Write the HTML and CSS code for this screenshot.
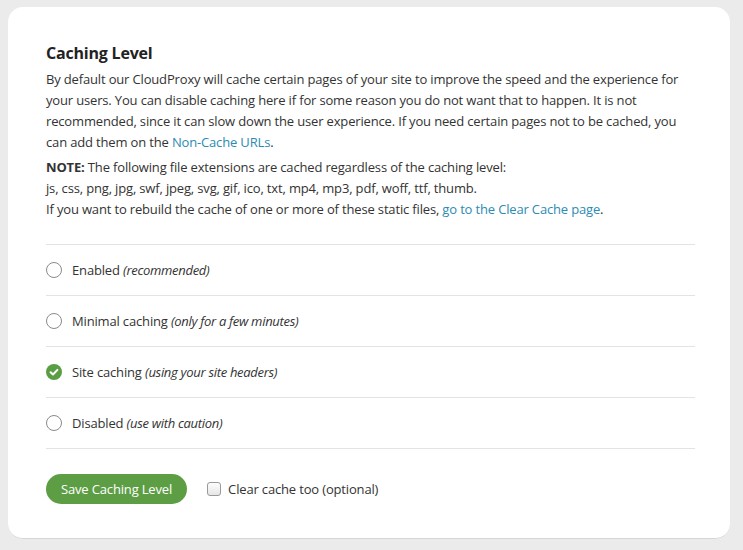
FILE: index.html
```html
<!DOCTYPE html>
<html>
<head>
<meta charset="utf-8">
<link rel="stylesheet" href="styles.css">
</head>
<body>
<div class="card">
  <h2 class="title">Caching Level</h2>
  <p class="desc">By default our CloudProxy will cache certain pages of your site to improve the speed and the experience for your users. You can disable caching here if for some reason you do not want that to happen. It is not recommended, since it can slow down the user experience. If you need certain pages not to be cached, you can add them on the <a class="link" href="#">Non-Cache URLs</a>.</p>
  <p class="note"><strong>NOTE:</strong> The following file extensions are cached regardless of the caching level:<br>js, css, png, jpg, swf, jpeg, svg, gif, ico, txt, mp4, mp3, pdf, woff, ttf, thumb.<br>If you want to rebuild the cache of one or more of these static files, <a class="link" href="#">go to the Clear Cache page</a>.</p>
  <ul class="options">
    <li class="option"><span class="radio"></span><span>Enabled <em>(recommended)</em></span></li>
    <li class="option"><span class="radio"></span><span>Minimal caching <em>(only for a few minutes)</em></span></li>
    <li class="option"><span class="radio checked"><svg width="16" height="16" viewBox="0 0 16 16"><circle cx="8" cy="8" r="8" fill="#5a9e43"/><path d="M4.6 8.2 L7 10.5 L11.4 5.9" fill="none" stroke="#fff" stroke-width="2" stroke-linecap="round" stroke-linejoin="round"/></svg></span><span>Site caching <em>(using your site headers)</em></span></li>
    <li class="option"><span class="radio"></span><span>Disabled <em>(use with caution)</em></span></li>
  </ul>
  <div class="actions">
    <button class="save">Save Caching Level</button>
    <label class="check"><span class="box"></span>Clear cache too (optional)</label>
  </div>
</div>
</body>
</html>
```
FILE: styles.css
```css
html, body {
  margin: 0;
  padding: 0;
  background: #ebebeb;
}
body {
  font-family: "Open Sans", "Noto Sans", sans-serif;
  color: #333;
  font-size: 13px;
  letter-spacing: -0.16px;
}
.card {
  box-sizing: border-box;
  margin: 7px 0 0 8px;
  width: 722px;
  height: 532px;
  background: #fff;
  border-radius: 15px;
  border-bottom: 1px solid #d6d6d6;
  padding: 36px 35px 0 38px;
}
.title {
  margin: 0 0 6px;
  font-size: 16px;
  line-height: 20px;
  font-weight: 700;
  color: #222;
  letter-spacing: -0.2px;
}
.desc {
  margin: 0 0 4px;
  line-height: 21px;
}
.note {
  margin: 0 0 24px;
  line-height: 21px;
}
.note strong { font-weight: 700; }
.link {
  color: #2b8bb3;
  text-decoration: none;
}
.options {
  list-style: none;
  margin: 0;
  padding: 0;
  border-bottom: 1px solid #e3e3e3;
}
.option {
  display: flex;
  align-items: center;
  gap: 10px;
  height: 50px;
  border-top: 1px solid #e3e3e3;
}
.option em {
  font-style: italic;
  letter-spacing: -0.3px;
}
.radio {
  box-sizing: border-box;
  width: 16px;
  height: 16px;
  border: 1px solid #8a8a8a;
  border-radius: 50%;
  flex: none;
}
.radio.checked {
  border: none;
}
.radio svg { display: block; }
.actions {
  display: flex;
  align-items: center;
  margin-top: 25px;
  gap: 20px;
}
.save {
  font-family: "Open Sans", "Noto Sans", sans-serif;
  font-size: 13px;
  letter-spacing: -0.16px;
  color: #fff;
  background: #5d9e45;
  border: none;
  border-radius: 15px;
  height: 30px;
  padding: 0 15px;
  line-height: 30px;
}
.check {
  display: flex;
  align-items: center;
  gap: 7px;
  font-size: 13px;
}
.box {
  box-sizing: border-box;
  width: 14px;
  height: 14px;
  border: 1px solid #999;
  border-radius: 3px;
  background: linear-gradient(#fdfdfd, #e6e6e6);
}
```
